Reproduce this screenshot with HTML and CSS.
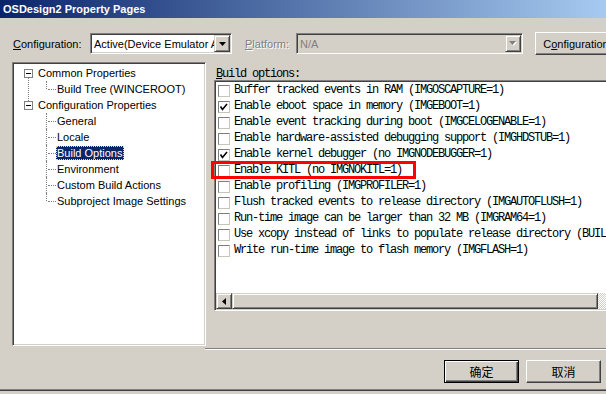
FILE: index.html
```html
<!DOCTYPE html>
<html>
  <head>
    <meta charset="UTF-8" />
    <title>OSDesign2 Property Pages</title>
    <link rel="stylesheet" href="styles.css">
  </head>
  <body>
    <div class="window">
      <div class="titlebar">OSDesign2 Property Pages</div>

      <div class="config-bar">
        <span class="field-label config-label"><u>C</u>onfiguration:</span>
        <div class="combo config-combo">
          <span class="combo-text">Active(Device Emulator ARMV4I)</span>
          <span class="combo-arrow">
            <svg width="7" height="4" viewBox="0 0 7 4"><polygon points="0,0 7,0 3.5,4" fill="#000"/></svg>
          </span>
        </div>
        <span class="field-label platform-label disabled"><u>P</u>latform:</span>
        <div class="combo platform-combo disabled">
          <span class="combo-text">N/A</span>
          <span class="combo-arrow">
            <svg width="8" height="5" viewBox="0 0 8 5"><polygon points="1,1 8,1 4.5,5" fill="#fff"/><polygon points="0,0 7,0 3.5,4" fill="#808080"/></svg>
          </span>
        </div>
        <button class="btn manager-btn">C<u>o</u>nfiguration Manager...</button>
      </div>

      <div class="content">
        <div class="tree">
          <ul class="tree-list">
            <li class="tree-root first">
              <div class="tree-row"><span class="toggle"></span><span class="tree-label">Common Properties</span></div>
              <ul class="tree-children">
                <li class="tree-row last"><span class="branch"></span><span class="tree-label">Build Tree (WINCEROOT)</span></li>
              </ul>
            </li>
            <li class="tree-root">
              <div class="tree-row"><span class="toggle"></span><span class="tree-label">Configuration Properties</span></div>
              <ul class="tree-children">
                <li class="tree-row"><span class="branch"></span><span class="tree-label">General</span></li>
                <li class="tree-row"><span class="branch"></span><span class="tree-label">Locale</span></li>
                <li class="tree-row"><span class="branch"></span><span class="tree-label selected">Build Options</span></li>
                <li class="tree-row"><span class="branch"></span><span class="tree-label">Environment</span></li>
                <li class="tree-row"><span class="branch"></span><span class="tree-label">Custom Build Actions</span></li>
                <li class="tree-row last"><span class="branch"></span><span class="tree-label">Subproject Image Settings</span></li>
              </ul>
            </li>
          </ul>
        </div>

        <div class="page">
          <div class="page-label"><u>B</u>uild options:</div>
          <div class="listbox">
            <div class="list-rows">
              <div class="list-row"><span class="check"></span><span class="row-text">Buffer tracked events in RAM (IMGOSCAPTURE=1)</span></div>
              <div class="list-row"><span class="check"><svg width="10" height="10" viewBox="0 0 10 10"><polyline points="1.5,4.5 3.5,7.5 8,2" fill="none" stroke="#000" stroke-width="1.6"/></svg></span><span class="row-text">Enable eboot space in memory (IMGEBOOT=1)</span></div>
              <div class="list-row"><span class="check"></span><span class="row-text">Enable event tracking during boot (IMGCELOGENABLE=1)</span></div>
              <div class="list-row"><span class="check"></span><span class="row-text">Enable hardware-assisted debugging support (IMGHDSTUB=1)</span></div>
              <div class="list-row"><span class="check"><svg width="10" height="10" viewBox="0 0 10 10"><polyline points="1.5,4.5 3.5,7.5 8,2" fill="none" stroke="#000" stroke-width="1.6"/></svg></span><span class="row-text">Enable kernel debugger (no IMGNODEBUGGER=1)</span></div>
              <div class="list-row"><span class="check"></span><span class="row-text">Enable KITL (no IMGNOKITL=1)</span></div>
              <div class="list-row"><span class="check"></span><span class="row-text">Enable profiling (IMGPROFILER=1)</span></div>
              <div class="list-row"><span class="check"></span><span class="row-text">Flush tracked events to release directory (IMGAUTOFLUSH=1)</span></div>
              <div class="list-row"><span class="check"></span><span class="row-text">Run-time image can be larger than 32 MB (IMGRAM64=1)</span></div>
              <div class="list-row"><span class="check"></span><span class="row-text">Use xcopy instead of links to populate release directory (BUILDREL_USE_COPY=1)</span></div>
              <div class="list-row"><span class="check"></span><span class="row-text">Write run-time image to flash memory (IMGFLASH=1)</span></div>
            </div>
            <div class="hscroll">
              <span class="scroll-btn">
                <svg width="4" height="7" viewBox="0 0 4 7"><polygon points="4,0 4,7 0,3.5" fill="#000"/></svg>
              </span>
              <span class="scroll-thumb"></span>
              <span class="scroll-track"></span>
            </div>
          </div>
          <div class="marker"></div>
          <div class="page-separator"></div>
        </div>
      </div>

      <div class="dialog-buttons">
        <button class="btn dialog-btn default">确定</button>
        <button class="btn dialog-btn">取消</button>
      </div>
      <div class="frame-bottom"></div>
    </div>
  </body>
</html>
```

FILE: styles.css
```css
body {
  margin: 0;
  font-family: "Liberation Sans", Arial, sans-serif;
  font-size: 11px;
  color: #000;
}

.window {
  width: 606px;
  height: 394px;
  overflow: hidden;
  background: #d4d0c8;
}

.titlebar {
  height: 18px;
  line-height: 18px;
  padding-left: 3px;
  background: linear-gradient(to right, #0a246a, #a6caf0);
  color: #fff;
  font-weight: bold;
  font-size: 11px;
  white-space: nowrap;
}

/* top row: configuration / platform */

.config-bar {
  display: flex;
  align-items: center;
  height: 23px;
  padding: 14px 0 0 13px;
  white-space: nowrap;
}

.field-label {
  flex: none;
}

.config-label {
  width: 77px;
}

.platform-label {
  width: 51px;
  margin-left: 13px;
}

.disabled {
  color: #808080;
}

.field-label.disabled {
  text-shadow: 1px 1px #fff;
}

.combo {
  flex: none;
  display: flex;
  align-items: center;
  height: 21px;
  box-sizing: border-box;
  padding: 1px;
  border: 1px solid;
  border-color: #808080 #fff #fff #808080;
  box-shadow: inset 1px 1px #404040, inset -1px -1px #d4d0c8;
  background: #fff;
}

.combo.disabled {
  background: #d4d0c8;
}

.config-combo {
  width: 142px;
}

.platform-combo {
  width: 227px;
}

.combo-text {
  flex: 1;
  overflow: hidden;
  padding-left: 2px;
  white-space: nowrap;
}

.combo-arrow {
  flex: none;
  width: 16px;
  height: 17px;
  box-sizing: border-box;
  display: flex;
  align-items: center;
  justify-content: center;
  background: #d4d0c8;
  border: 1px solid;
  border-color: #d4d0c8 #404040 #404040 #d4d0c8;
  box-shadow: inset 1px 1px #fff, inset -1px -1px #808080;
}

.btn {
  font-family: "Liberation Sans", Arial, sans-serif;
  font-size: 11px;
  color: #000;
  background: #d4d0c8;
  height: 23px;
  padding: 0;
  border: 1px solid;
  border-color: #fff #404040 #404040 #fff;
  box-shadow: inset -1px -1px #808080, inset 1px 1px #d4d0c8;
  white-space: nowrap;
}

.manager-btn {
  flex: none;
  width: 137px;
  margin-left: 12px;
}

/* main area */

.content {
  display: flex;
  align-items: flex-start;
  margin-top: 7px;
}

.tree {
  flex: none;
  width: 194px;
  height: 284px;
  box-sizing: border-box;
  margin-left: 12px;
  padding: 2px 1px 1px;
  background: #fff;
  border: 1px solid;
  border-color: #808080 #fff #fff #808080;
  box-shadow: inset 1px 1px #404040, inset -1px -1px #d4d0c8;
}

.tree-list,
.tree-children {
  list-style: none;
  margin: 0;
  padding: 0;
}

.tree-root {
  position: relative;
}

.tree-root.first::before {
  content: "";
  position: absolute;
  left: 14px;
  top: 13px;
  height: 23px;
  border-left: 1px dotted #808080;
}

.tree-row {
  display: flex;
  align-items: center;
  height: 16px;
  white-space: nowrap;
}

.toggle {
  flex: none;
  position: relative;
  width: 9px;
  height: 9px;
  box-sizing: border-box;
  margin-left: 10px;
  margin-right: 4px;
  border: 1px solid #808080;
  background: #fff;
}

.toggle::after {
  content: "";
  position: absolute;
  left: 1px;
  top: 3px;
  width: 5px;
  height: 1px;
  background: #000;
}

.branch {
  flex: none;
  position: relative;
  align-self: stretch;
  width: 10px;
  margin-left: 32px;
}

.branch::before {
  content: "";
  position: absolute;
  left: 0;
  top: 0;
  bottom: 0;
  border-left: 1px dotted #808080;
}

.tree-row.last .branch::before {
  bottom: 8px;
}

.branch::after {
  content: "";
  position: absolute;
  left: 2px;
  top: 8px;
  width: 8px;
  border-top: 1px dotted #808080;
}

.tree-label {
  line-height: 14px;
  padding: 0 2px 0 1px;
}

.tree-label.selected {
  background: #0a246a;
  color: #fff;
  outline: 1px dotted #e8d890;
  outline-offset: -1px;
}

.page {
  position: relative;
  flex: 1;
  padding-top: 6px;
}

.page-label,
.row-text {
  font-family: "Liberation Mono", "Courier New", monospace;
  font-size: 12px;
  letter-spacing: -1.2px;
}

.page-label {
  height: 12px;
  line-height: 12px;
  padding-left: 10px;
}

.listbox {
  display: flex;
  flex-direction: column;
  width: 400px;
  height: 231px;
  box-sizing: border-box;
  margin-left: 8px;
  padding: 1px;
  background: #fff;
  border: 1px solid;
  border-color: #808080 #fff #fff #808080;
  box-shadow: inset 1px 1px #404040, inset -1px -1px #d4d0c8;
}

.list-rows {
  flex: 1;
}

.list-row {
  display: flex;
  align-items: center;
  height: 16px;
  white-space: pre;
  overflow: hidden;
}

.check {
  flex: none;
  display: flex;
  align-items: center;
  justify-content: center;
  width: 12px;
  height: 12px;
  box-sizing: border-box;
  margin: 1px 4px 0 2px;
  background: #fff;
  border: 1px solid;
  border-color: #808080 #c8c4bc #c8c4bc #808080;
}

.hscroll {
  display: flex;
  height: 16px;
}

.scroll-btn,
.scroll-thumb {
  flex: none;
  box-sizing: border-box;
  height: 16px;
  background: #d4d0c8;
  border: 1px solid;
  border-color: #d4d0c8 #404040 #404040 #d4d0c8;
  box-shadow: inset 1px 1px #fff, inset -1px -1px #808080;
}

.scroll-btn {
  display: flex;
  align-items: center;
  justify-content: center;
  width: 16px;
}

.scroll-thumb {
  width: 366px;
}

.scroll-track {
  flex: 1;
  background: repeating-conic-gradient(#fff 0 25%, #d4d0c8 0 50%) 0 0 / 2px 2px;
}

.marker {
  position: absolute;
  left: 5px;
  top: 99px;
  width: 205px;
  height: 18px;
  box-sizing: border-box;
  border: 3px solid #f00;
}

.page-separator {
  margin: 37px 0 0 -1px;
  border-top: 1px solid #808080;
  border-bottom: 1px solid #fff;
}

/* bottom buttons */

.dialog-buttons {
  display: flex;
  justify-content: flex-end;
  gap: 7px;
  margin-top: 10px;
  padding-right: 5px;
}

.dialog-btn {
  width: 75px;
  font-family: "Noto Sans CJK SC", sans-serif;
  font-size: 12px;
}

.dialog-btn.default {
  border: 1px solid #000;
  box-shadow: inset 1px 1px #fff, inset -1px -1px #404040, inset -2px -2px #808080;
}

.frame-bottom {
  margin-top: 6px;
  border-top: 1px solid #808080;
  border-bottom: 1px solid #404040;
}
```
